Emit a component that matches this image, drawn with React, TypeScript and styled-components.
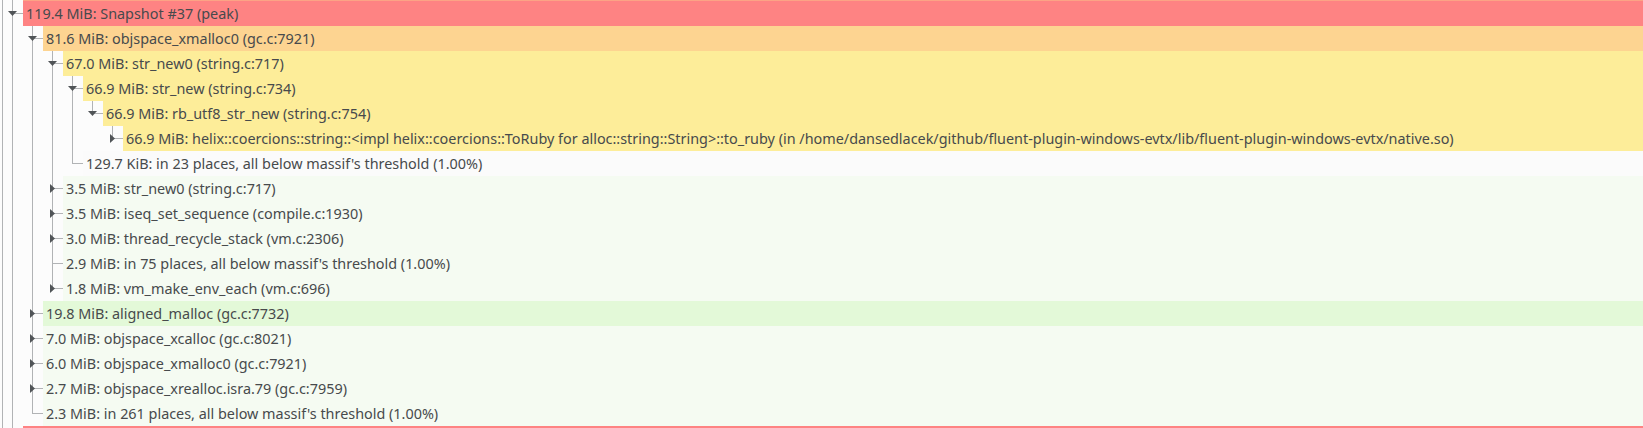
import styled, { createGlobalStyle } from "styled-components";

type Tone = "prev" | "peak" | "hot" | "warm" | "plain" | "cool" | "fresh";
type Kind = "open" | "closed" | "leaf";

type Item = {
  level: number;
  kind: Kind;
  tone: Tone;
  label: string;
};

const tones: Record<Tone, string> = {
  prev: "#fca385",
  peak: "#fe8383",
  hot: "#fdd491",
  warm: "#fded99",
  plain: "#fbfbfb",
  cool: "#f5fbf2",
  fresh: "#e3f9d8",
};

const items: Item[] = [
  { level: 0, kind: "closed", tone: "prev", label: "" },
  { level: 0, kind: "open", tone: "peak", label: "119.4 MiB: Snapshot #37 (peak)" },
  { level: 1, kind: "open", tone: "hot", label: "81.6 MiB: objspace_xmalloc0 (gc.c:7921)" },
  { level: 2, kind: "open", tone: "warm", label: "67.0 MiB: str_new0 (string.c:717)" },
  { level: 3, kind: "open", tone: "warm", label: "66.9 MiB: str_new (string.c:734)" },
  { level: 4, kind: "open", tone: "warm", label: "66.9 MiB: rb_utf8_str_new (string.c:754)" },
  {
    level: 5,
    kind: "closed",
    tone: "warm",
    label:
      "66.9 MiB: helix::coercions::string::<impl helix::coercions::ToRuby for alloc::string::String>::to_ruby (in /home/dansedlacek/github/fluent-plugin-windows-evtx/lib/fluent-plugin-windows-evtx/native.so)",
  },
  { level: 3, kind: "leaf", tone: "plain", label: "129.7 KiB: in 23 places, all below massif's threshold (1.00%)" },
  { level: 2, kind: "closed", tone: "cool", label: "3.5 MiB: str_new0 (string.c:717)" },
  { level: 2, kind: "closed", tone: "cool", label: "3.5 MiB: iseq_set_sequence (compile.c:1930)" },
  { level: 2, kind: "closed", tone: "cool", label: "3.0 MiB: thread_recycle_stack (vm.c:2306)" },
  { level: 2, kind: "leaf", tone: "cool", label: "2.9 MiB: in 75 places, all below massif's threshold (1.00%)" },
  { level: 2, kind: "closed", tone: "cool", label: "1.8 MiB: vm_make_env_each (vm.c:696)" },
  { level: 1, kind: "closed", tone: "fresh", label: "19.8 MiB: aligned_malloc (gc.c:7732)" },
  { level: 1, kind: "closed", tone: "cool", label: "7.0 MiB: objspace_xcalloc (gc.c:8021)" },
  { level: 1, kind: "closed", tone: "cool", label: "6.0 MiB: objspace_xmalloc0 (gc.c:7921)" },
  { level: 1, kind: "closed", tone: "cool", label: "2.7 MiB: objspace_xrealloc.isra.79 (gc.c:7959)" },
  { level: 1, kind: "leaf", tone: "cool", label: "2.3 MiB: in 261 places, all below massif's threshold (1.00%)" },
  { level: 0, kind: "closed", tone: "peak", label: "" },
];

const ROW = 25;
const INDENT = 20;

const GlobalStyle = createGlobalStyle`
  html, body {
    margin: 0;
    padding: 0;
    background: #fcfcfc;
  }
  body {
    font-family: "Noto Sans", "DejaVu Sans", sans-serif;
  }
`;

const SView = styled.div`
  height: 428px;
  overflow: hidden;
  background: #fcfcfc;
`;

// scrolled so that only the last pixel of the previous snapshot shows
const SList = styled.div`
  display: flex;
  flex-direction: column;
  margin-top: -24px;
`;

const SRow = styled.div`
  display: flex;
  height: ${ROW}px;
  flex: none;
`;

const SGutter = styled.svg`
  flex: none;
  display: block;
`;

const SCell = styled.div<{ $tone: Tone }>`
  flex: 1;
  min-width: 0;
  background: ${(p) => tones[p.$tone]};
  padding-left: 3px;
  font-size: 14.4px;
  line-height: ${ROW}px;
  color: #474a4c;
  white-space: nowrap;
  overflow: hidden;
`;

// does the column at `level` keep going below row idx?
function continues(idx: number, level: number) {
  for (let j = idx + 1; j < items.length; j++) {
    if (items[j].level < level) return false;
    if (items[j].level === level) return true;
  }
  return false;
}

function Branches({ idx }: { idx: number }) {
  const item = items[idx];
  const width = 23 + INDENT * item.level;
  const mid = 12.5;
  const own = 12.5 + INDENT * item.level;
  const lineColor = "#b1b3b5";

  const guides = [];
  for (let k = 0; k < item.level; k++) {
    if (continues(idx, k)) {
      const x = 12.5 + INDENT * k;
      guides.push(<line key={k} x1={x} y1={0} x2={x} y2={ROW} />);
    }
  }

  return (
    <SGutter width={width} height={ROW} viewBox={`0 0 ${width} ${ROW}`}>
      <g stroke={lineColor} strokeWidth={1} shapeRendering="crispEdges">
        <line x1={2.5} y1={0} x2={2.5} y2={ROW} />
        {guides}
        <line x1={own} y1={0} x2={own} y2={continues(idx, item.level) ? ROW : mid} />
        <line x1={own} y1={mid} x2={width} y2={mid} />
      </g>
      {item.kind === "open" ? (
        <polygon
          points={`${own - 4.5},10 ${own + 4.5},10 ${own},15`}
          fill="#505457"
        />
      ) : null}
      {item.kind === "closed" ? (
        <polygon
          points={`${own - 2.5},8 ${own + 2.5},12.5 ${own - 2.5},17`}
          fill="#505457"
        />
      ) : null}
    </SGutter>
  );
}

export default function App() {
  return (
    <>
      <GlobalStyle />
      <SView>
        <SList>
          {items.map((item, idx) => (
            <SRow key={idx}>
              <Branches idx={idx} />
              <SCell $tone={item.tone}>{item.label}</SCell>
            </SRow>
          ))}
        </SList>
      </SView>
    </>
  );
}
